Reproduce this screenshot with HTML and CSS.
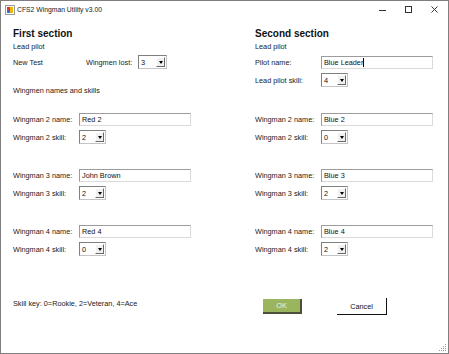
FILE: index.html
```html
<!DOCTYPE html>
<html lang="en">
  <head>
    <meta charset="UTF-8" />
    <meta name="viewport" content="width=device-width, initial-scale=1.0" />
    <title>CFS2 Wingman Utility v3.00</title>
    <link rel="stylesheet" href="styles.css">
  </head>
  <body>
    <div class="window">
      <div class="titlebar">
        <svg class="app-icon" width="10" height="10" viewBox="0 0 10 10">
          <rect x="0.5" y="0.5" width="9" height="9" fill="#fff" stroke="#9a9a9a" />
          <rect x="2" y="2" width="3" height="3" fill="#e0392c" />
          <rect x="5" y="2" width="3" height="3" fill="#f2b705" />
          <rect x="2" y="5" width="3" height="3" fill="#2f6fd6" />
          <rect x="5" y="5" width="3" height="3" fill="#f2b705" />
        </svg>
        <span class="title">CFS2 Wingman Utility v3.00</span>
        <div class="caption-buttons">
          <span class="cap-btn min">
            <svg width="8" height="8" viewBox="0 0 8 8"><path d="M0 4.5h7" stroke="#333" /></svg>
          </span>
          <span class="cap-btn">
            <svg width="8" height="8" viewBox="0 0 8 8"><rect x="0.5" y="0.5" width="6" height="6" fill="none" stroke="#333" /></svg>
          </span>
          <span class="cap-btn">
            <svg width="8" height="8" viewBox="0 0 8 8"><path d="M0.5 0.5l6 6M6.5 0.5l-6 6" stroke="#333" /></svg>
          </span>
        </div>
      </div>

      <div class="content">
        <section class="top">
          <h2>First section</h2>
          <div class="caption">Lead pilot</div>
          <div class="row">
            <span class="label pilot">New Test</span>
            <span class="label lost">Wingmen lost:</span>
            <div class="combo wide"><span>3</span><i class="drop"></i></div>
          </div>
          <div class="caption names">Wingmen names and skills</div>
        </section>

        <section class="top">
          <h2>Second section</h2>
          <div class="caption">Lead pilot</div>
          <div class="row">
            <span class="label">Pilot name:</span>
            <div class="textbox">Blue Leader<span class="caret"></span></div>
          </div>
          <div class="row skill">
            <span class="label">Lead pilot skill:</span>
            <div class="combo"><span>4</span><i class="drop"></i></div>
          </div>
        </section>

        <section class="groups">
          <div class="group">
            <div class="row"><span class="label">Wingman 2 name:</span><div class="textbox">Red 2</div></div>
            <div class="row"><span class="label">Wingman 2 skill:</span><div class="combo"><span>2</span><i class="drop"></i></div></div>
          </div>
          <div class="group">
            <div class="row"><span class="label">Wingman 3 name:</span><div class="textbox">John Brown</div></div>
            <div class="row"><span class="label">Wingman 3 skill:</span><div class="combo"><span>2</span><i class="drop"></i></div></div>
          </div>
          <div class="group">
            <div class="row"><span class="label">Wingman 4 name:</span><div class="textbox">Red 4</div></div>
            <div class="row"><span class="label">Wingman 4 skill:</span><div class="combo"><span>0</span><i class="drop"></i></div></div>
          </div>
        </section>

        <section class="groups">
          <div class="group">
            <div class="row"><span class="label">Wingman 2 name:</span><div class="textbox">Blue 2</div></div>
            <div class="row"><span class="label">Wingman 2 skill:</span><div class="combo"><span>0</span><i class="drop"></i></div></div>
          </div>
          <div class="group">
            <div class="row"><span class="label">Wingman 3 name:</span><div class="textbox">Blue 3</div></div>
            <div class="row"><span class="label">Wingman 3 skill:</span><div class="combo"><span>2</span><i class="drop"></i></div></div>
          </div>
          <div class="group">
            <div class="row"><span class="label">Wingman 4 name:</span><div class="textbox">Blue 4</div></div>
            <div class="row"><span class="label">Wingman 4 skill:</span><div class="combo"><span>2</span><i class="drop"></i></div></div>
          </div>
        </section>

        <div class="skill-key">Skill key: 0=Rookie, 2=Veteran, 4=Ace</div>
        <div class="actions">
          <button class="ok" type="button">OK</button>
          <button class="cancel" type="button">Cancel</button>
        </div>
      </div>

      <svg class="grip" width="8" height="8" viewBox="0 0 8 8">
        <rect x="6" y="0" width="1" height="1" fill="#999" />
        <rect x="4" y="2" width="1" height="1" fill="#999" />
        <rect x="6" y="2" width="1" height="1" fill="#999" />
        <rect x="2" y="4" width="1" height="1" fill="#999" />
        <rect x="4" y="4" width="1" height="1" fill="#999" />
        <rect x="6" y="4" width="1" height="1" fill="#999" />
        <rect x="0" y="6" width="1" height="1" fill="#999" />
        <rect x="2" y="6" width="1" height="1" fill="#999" />
        <rect x="4" y="6" width="1" height="1" fill="#999" />
        <rect x="6" y="6" width="1" height="1" fill="#999" />
      </svg>
    </div>
  </body>
</html>
```

FILE: styles.css
```css
body {
  margin: 0;
  font-family: "Liberation Sans", Arial, sans-serif;
  font-size: 7.3px;
  color: #222;
  background-color: #ffffff;
}

.window {
  position: relative;
  width: 449px;
  height: 354px;
  box-sizing: border-box;
  border: 1px solid #7f7f7f;
  background-color: #ffffff;
}

/* title bar */

.titlebar {
  display: flex;
  align-items: center;
  height: 17px;
}

.app-icon {
  flex: none;
  margin-left: 4px;
  margin-right: 2px;
}

.title {
  font-size: 6.8px;
  color: #222;
}

.caption-buttons {
  display: flex;
  margin-left: auto;
  height: 17px;
}

.cap-btn {
  display: flex;
  align-items: center;
  justify-content: center;
  width: 26px;
}

.cap-btn.min {
  width: 20px;
  margin-right: 3px;
}

/* form body */

.content {
  display: grid;
  grid-template-columns: 242px 1fr;
  padding-left: 12px;
}

.top {
  height: 95px;
}

h2 {
  margin: 9px 0 0;
  font-size: 10px;
  line-height: 14px;
  font-weight: bold;
  color: #111;
}

.caption {
  height: 12px;
  line-height: 12px;
}

.caption.names {
  margin-top: 16px;
}

.row {
  display: flex;
  align-items: center;
  height: 14px;
  margin-top: 2px;
}

.row.skill {
  margin-top: 4px;
}

.label {
  flex: none;
  width: 66px;
}

.label.pilot {
  width: 73px;
}

.label.lost {
  width: 52px;
}

.textbox {
  display: flex;
  align-items: center;
  width: 112px;
  height: 13px;
  box-sizing: border-box;
  padding-left: 2px;
  border: 1px solid;
  border-color: #9c9c9c #dadada #dadada #9c9c9c;
  color: #111;
}

.caret {
  width: 1px;
  height: 9px;
  background-color: #000;
}

.combo {
  display: flex;
  align-items: center;
  width: 27px;
  height: 14px;
  box-sizing: border-box;
  padding-left: 2px;
  border: 1px solid;
  border-color: #7f7f7f #c4c4c4 #c4c4c4 #7f7f7f;
  color: #111;
}

.combo.wide {
  width: 29px;
}

.drop {
  display: flex;
  align-items: center;
  justify-content: center;
  width: 9px;
  height: 10px;
  margin-left: auto;
  margin-right: 1px;
  box-sizing: border-box;
  background-color: #f0f0f0;
  border: 1px solid;
  border-color: #ffffff #6a6a6a #6a6a6a #ffffff;
}

.drop::after {
  content: "";
  margin-top: 1px;
  border-left: 2px solid transparent;
  border-right: 2px solid transparent;
  border-top: 3px solid #000;
}

.group {
  height: 56px;
}

.group .row {
  margin-top: 0;
}

.group .row:first-child {
  height: 13px;
}

.group .row + .row {
  margin-top: 4px;
}

/* footer */

.skill-key {
  padding-top: 17px;
  line-height: 12px;
}

.actions {
  display: flex;
  align-items: flex-start;
  padding-top: 17px;
  padding-left: 8px;
}

button {
  font-family: inherit;
  font-size: 7.3px;
  padding: 0;
  cursor: pointer;
}

.ok {
  width: 39px;
  height: 15px;
  margin-top: 1px;
  border: none;
  border-right: 2px solid #4b5138;
  border-bottom: 2px solid #4b5138;
  background-color: #9bb55e;
  color: #eef4df;
}

.cancel {
  width: 50px;
  height: 17px;
  margin-left: 35px;
  border: none;
  border-right: 1px solid #111;
  border-bottom: 1px solid #111;
  background-color: #ffffff;
  color: #111;
}

.grip {
  position: absolute;
  right: 1px;
  bottom: 1px;
}
```
